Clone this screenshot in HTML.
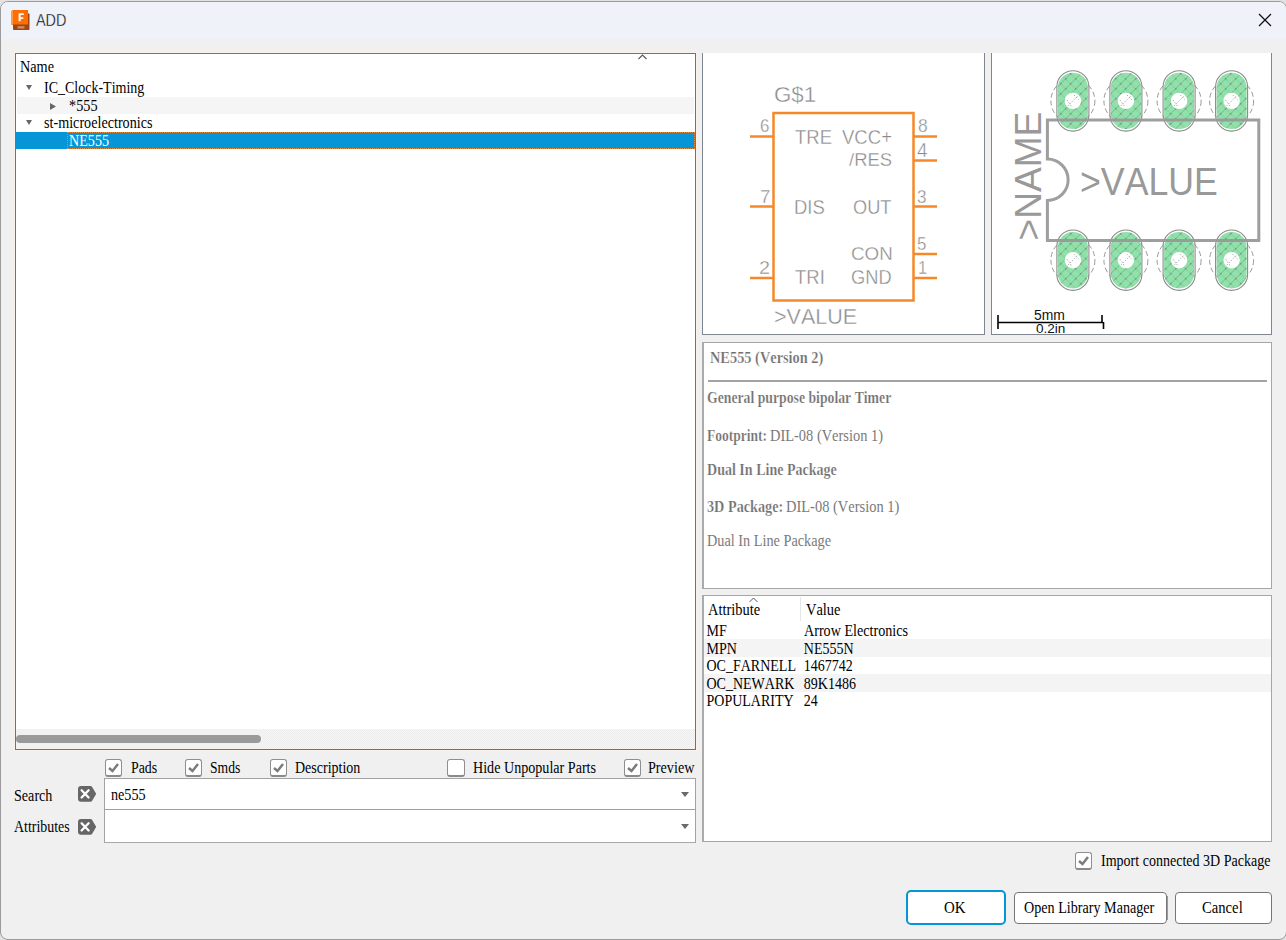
<!DOCTYPE html>
<html><head><meta charset="utf-8">
<style>
*{box-sizing:border-box}
html,body{margin:0;padding:0}
body{width:1286px;height:940px;overflow:hidden;position:relative;background:#e2e2e2;font-family:"Liberation Serif",serif}
.a{position:absolute}
.t{position:absolute;white-space:nowrap;line-height:1;font-kerning:none}
.f1{font-family:"Liberation Serif",serif}
.f2{font-family:"Liberation Sans",sans-serif}
#win{position:absolute;left:0;top:1px;width:1287px;height:939px;border:1px solid #9b9b9b;border-radius:8px;background:#f0f0f0;overflow:hidden}
.cb{position:absolute;width:17px;height:18px;border:1px solid #8e8e8e;border-bottom:2px solid #8a8a8a;border-radius:3px;background:#fff}
.btn{position:absolute;background:#fff;border:1px solid #767676;border-radius:4px}
</style></head><body>
<div id="win">
  <div class="a" style="left:0;top:0;width:1286px;height:37px;background:#eff3f9"></div>
</div>
<!-- app icon -->
<svg class="a" style="left:10px;top:9px" width="21" height="22" viewBox="0 0 21 22">
  <path d="M3 1 H17 Q18 1 18 2 V4 L19.5 5 V20 Q19.5 21 18.5 21 H4 Q3 21 3 20 V16 L1 14.5 V3 Z" fill="#9e4511"/>
  <path d="M1 3 L3 1 H16.5 Q18 1 18 2.5 V15.5 H1 Z" fill="#ff6d05"/>
  <path d="M1 3 L3 1 V15.5 H1 Z" fill="#ff9a44"/>
  <path d="M8.6 4.3 H13.8 V6.1 H10.7 V8.3 H13.3 V10 H10.7 V12.3 H8.6 Z" fill="#fff6ee"/>
  <rect x="7.5" y="17.2" width="7" height="2.3" fill="#e0a884" opacity="0.75"/>
</svg>
<!-- close X -->
<svg class="a" style="left:1258px;top:13px" width="15" height="15" viewBox="0 0 15 15">
  <path d="M1 1 L13 13 M13 1 L1 13" stroke="#111" stroke-width="1.3"/>
</svg>

<!-- tree -->
<div class="a" style="left:14px;top:52px;width:683px;height:699px;border:1px solid #fbf1ea"></div>
<div class="a" style="left:15px;top:53px;width:681px;height:697px;border:1px solid #0696d7;background:#fff"></div>
<div class="a" style="left:17px;top:97px;width:677px;height:17px;background:#f5f5f5"></div>
<div class="a" style="left:16px;top:132px;width:679px;height:17px;background:#0696d7"></div>
<div class="a" style="left:67px;top:132px;width:628px;height:17px;border:1px dotted #e08a40"></div>
<svg class="a" style="left:637px;top:53px" width="11" height="7"><path d="M1.5 6 L5.5 2 L9.5 6" fill="none" stroke="#555" stroke-width="1.1"/></svg>
<svg class="a" style="left:25px;top:84px" width="8" height="7"><path d="M1 1 H7 L4 6 Z" fill="#666"/></svg>
<svg class="a" style="left:25px;top:119px" width="8" height="7"><path d="M1 1 H7 L4 6 Z" fill="#666"/></svg>
<svg class="a" style="left:49px;top:101.5px" width="8" height="9"><path d="M1 1 V8 L7 4.5 Z" fill="#666"/></svg>
<!-- scrollbar -->
<div class="a" style="left:16px;top:729px;width:679px;height:20px;background-color:#f7f7f7;background-image:linear-gradient(45deg,#ececec 25%,transparent 25%,transparent 75%,#ececec 75%),linear-gradient(45deg,#ececec 25%,transparent 25%,transparent 75%,#ececec 75%);background-size:2px 2px;background-position:0 0,1px 1px"></div>
<div class="a" style="left:16px;top:729px;width:244px;height:20px;background:#f1f1f1"></div>
<div class="a" style="left:16px;top:735px;width:245px;height:8px;background:#9a9a9a;border-radius:4px"></div>

<!-- checkboxes -->
<div class="cb" style="left:105px;top:759px"></div>
<div class="cb" style="left:185px;top:759px"></div>
<div class="cb" style="left:270px;top:759px"></div>
<div class="cb" style="left:447px;top:759px;width:18px"></div>
<div class="cb" style="left:624px;top:759px"></div>
<div class="cb" style="left:1075px;top:852px"></div>
<svg class="a" style="left:105px;top:759px" width="17" height="18"><path d="M4 9 L7.5 12 L13 5" fill="none" stroke="#7c7c7c" stroke-width="2.5"/></svg>
<svg class="a" style="left:185px;top:759px" width="17" height="18"><path d="M4 9 L7.5 12 L13 5" fill="none" stroke="#7c7c7c" stroke-width="2.5"/></svg>
<svg class="a" style="left:270px;top:759px" width="17" height="18"><path d="M4 9 L7.5 12 L13 5" fill="none" stroke="#7c7c7c" stroke-width="2.5"/></svg>
<svg class="a" style="left:624px;top:759px" width="17" height="18"><path d="M4 9 L7.5 12 L13 5" fill="none" stroke="#7c7c7c" stroke-width="2.5"/></svg>
<svg class="a" style="left:1075px;top:852px" width="17" height="18"><path d="M4 9 L7.5 12 L13 5" fill="none" stroke="#7c7c7c" stroke-width="2.5"/></svg>

<!-- search / attributes -->
<svg class="a" style="left:77px;top:785px" width="21" height="18" viewBox="0 0 21 18"><path d="M4 1 H13.5 Q14.5 1 15 1.8 L19 8.5 Q19.3 8.9 19 9.3 L15 15.9 Q14.5 16.7 13.5 16.7 H4 Q1 16.7 1 13.7 V4 Q1 1 4 1 Z" fill="#666"/><path d="M4.6 5.3 L11.6 12.5 M11.6 5.3 L4.6 12.5" stroke="#fff" stroke-width="2.3" stroke-linecap="round"/></svg>
<svg class="a" style="left:77px;top:818px" width="21" height="18" viewBox="0 0 21 18"><path d="M4 1 H13.5 Q14.5 1 15 1.8 L19 8.5 Q19.3 8.9 19 9.3 L15 15.9 Q14.5 16.7 13.5 16.7 H4 Q1 16.7 1 13.7 V4 Q1 1 4 1 Z" fill="#666"/><path d="M4.6 5.3 L11.6 12.5 M11.6 5.3 L4.6 12.5" stroke="#fff" stroke-width="2.3" stroke-linecap="round"/></svg>
<div class="a" style="left:104px;top:778px;width:592px;height:33px;border:1px solid #a3a3a3;border-bottom:2px solid #a0a0a0;background:#fff"></div>
<div class="a" style="left:104px;top:810px;width:592px;height:33px;border:1px solid #a3a3a3;border-top:none;border-bottom:1px solid #a8a8a8;background:#fff"></div>
<svg class="a" style="left:680px;top:791px" width="10" height="7"><path d="M1 1 H9 L5 6 Z" fill="#6a6a6a"/></svg>
<svg class="a" style="left:680px;top:823px" width="10" height="7"><path d="M1 1 H9 L5 6 Z" fill="#6a6a6a"/></svg>

<!-- preview panels -->
<div class="a" style="left:702px;top:53px;width:283px;height:282px;border:1px solid #7f8690;border-top:none;background:#fff"></div>
<div class="a" style="left:991px;top:53px;width:281px;height:282px;border:1px solid #7f8690;border-top:none;background:#fff"></div>
<svg class="a" style="left:0;top:0" width="1286" height="940">
<g stroke="#f5892a" stroke-width="2.5" fill="none">
<rect x="773.5" y="113" width="140" height="187.5"/>
</g>
<g stroke="#f5892a" stroke-width="2.3">
<path d="M750 136.5 H773 M750 206.5 H773 M750 278 H773 M914 136.5 H937 M914 160.5 H937 M914 206.5 H937 M914 254 H937 M914 278 H937"/>
</g>
</svg>
<svg class="a" style="left:0;top:0" width="1286" height="940"><defs>
<pattern id="hat" patternUnits="userSpaceOnUse" width="7.07" height="7.07" patternTransform="translate(1072.9,100.9) rotate(45)">
<rect x="-0.5" y="0" width="1.1" height="7.07" fill="#6e7f73" opacity="0.6"/>
<rect x="0" y="3.1" width="7.07" height="0.9" fill="#7a9a82" opacity="0.35"/>
<rect x="-0.8" y="2.7" width="1.8" height="1.8" fill="#6a6a6a" opacity="0.75"/>
</pattern>
</defs>
<circle cx="1072.9" cy="100.9" r="22" fill="none" stroke="#8c8c8c" stroke-width="0.9" stroke-dasharray="5 3"/>
<rect x="1057.9" y="72.7" width="30" height="56.4" rx="15" fill="#8fe3aa"/>
<rect x="1057.9" y="72.7" width="30" height="56.4" rx="15" fill="url(#hat)"/>
<rect x="1056.9" y="70.7" width="32" height="60.4" rx="16" fill="none" stroke="#8a8a8a" stroke-width="1.1"/>
<circle cx="1072.9" cy="100.9" r="8.2" fill="#fff"/>
<path d="M1067.9 105.9 L1077.9 95.9 M1066.9 99.9 L1071.9 106.9 M1073.9 94.9 L1078.9 99.9" stroke="#9a9a9a" stroke-width="0.8" stroke-dasharray="1.5 1.5"/>
<circle cx="1125.9" cy="100.9" r="22" fill="none" stroke="#8c8c8c" stroke-width="0.9" stroke-dasharray="5 3"/>
<rect x="1110.9" y="72.7" width="30" height="56.4" rx="15" fill="#8fe3aa"/>
<rect x="1110.9" y="72.7" width="30" height="56.4" rx="15" fill="url(#hat)"/>
<rect x="1109.9" y="70.7" width="32" height="60.4" rx="16" fill="none" stroke="#8a8a8a" stroke-width="1.1"/>
<circle cx="1125.9" cy="100.9" r="8.2" fill="#fff"/>
<path d="M1120.9 105.9 L1130.9 95.9 M1119.9 99.9 L1124.9 106.9 M1126.9 94.9 L1131.9 99.9" stroke="#9a9a9a" stroke-width="0.8" stroke-dasharray="1.5 1.5"/>
<circle cx="1179.1" cy="100.9" r="22" fill="none" stroke="#8c8c8c" stroke-width="0.9" stroke-dasharray="5 3"/>
<rect x="1164.1" y="72.7" width="30" height="56.4" rx="15" fill="#8fe3aa"/>
<rect x="1164.1" y="72.7" width="30" height="56.4" rx="15" fill="url(#hat)"/>
<rect x="1163.1" y="70.7" width="32" height="60.4" rx="16" fill="none" stroke="#8a8a8a" stroke-width="1.1"/>
<circle cx="1179.1" cy="100.9" r="8.2" fill="#fff"/>
<path d="M1174.1 105.9 L1184.1 95.9 M1173.1 99.9 L1178.1 106.9 M1180.1 94.9 L1185.1 99.9" stroke="#9a9a9a" stroke-width="0.8" stroke-dasharray="1.5 1.5"/>
<circle cx="1231.6" cy="100.9" r="22" fill="none" stroke="#8c8c8c" stroke-width="0.9" stroke-dasharray="5 3"/>
<rect x="1216.6" y="72.7" width="30" height="56.4" rx="15" fill="#8fe3aa"/>
<rect x="1216.6" y="72.7" width="30" height="56.4" rx="15" fill="url(#hat)"/>
<rect x="1215.6" y="70.7" width="32" height="60.4" rx="16" fill="none" stroke="#8a8a8a" stroke-width="1.1"/>
<circle cx="1231.6" cy="100.9" r="8.2" fill="#fff"/>
<path d="M1226.6 105.9 L1236.6 95.9 M1225.6 99.9 L1230.6 106.9 M1232.6 94.9 L1237.6 99.9" stroke="#9a9a9a" stroke-width="0.8" stroke-dasharray="1.5 1.5"/>
<circle cx="1072.9" cy="260.2" r="22" fill="none" stroke="#8c8c8c" stroke-width="0.9" stroke-dasharray="5 3"/>
<rect x="1057.9" y="232.0" width="30" height="56.4" rx="15" fill="#8fe3aa"/>
<rect x="1057.9" y="232.0" width="30" height="56.4" rx="15" fill="url(#hat)"/>
<rect x="1056.9" y="230.0" width="32" height="60.4" rx="16" fill="none" stroke="#8a8a8a" stroke-width="1.1"/>
<circle cx="1072.9" cy="260.2" r="8.2" fill="#fff"/>
<path d="M1067.9 265.2 L1077.9 255.2 M1066.9 259.2 L1071.9 266.2 M1073.9 254.2 L1078.9 259.2" stroke="#9a9a9a" stroke-width="0.8" stroke-dasharray="1.5 1.5"/>
<circle cx="1125.9" cy="260.2" r="22" fill="none" stroke="#8c8c8c" stroke-width="0.9" stroke-dasharray="5 3"/>
<rect x="1110.9" y="232.0" width="30" height="56.4" rx="15" fill="#8fe3aa"/>
<rect x="1110.9" y="232.0" width="30" height="56.4" rx="15" fill="url(#hat)"/>
<rect x="1109.9" y="230.0" width="32" height="60.4" rx="16" fill="none" stroke="#8a8a8a" stroke-width="1.1"/>
<circle cx="1125.9" cy="260.2" r="8.2" fill="#fff"/>
<path d="M1120.9 265.2 L1130.9 255.2 M1119.9 259.2 L1124.9 266.2 M1126.9 254.2 L1131.9 259.2" stroke="#9a9a9a" stroke-width="0.8" stroke-dasharray="1.5 1.5"/>
<circle cx="1179.1" cy="260.2" r="22" fill="none" stroke="#8c8c8c" stroke-width="0.9" stroke-dasharray="5 3"/>
<rect x="1164.1" y="232.0" width="30" height="56.4" rx="15" fill="#8fe3aa"/>
<rect x="1164.1" y="232.0" width="30" height="56.4" rx="15" fill="url(#hat)"/>
<rect x="1163.1" y="230.0" width="32" height="60.4" rx="16" fill="none" stroke="#8a8a8a" stroke-width="1.1"/>
<circle cx="1179.1" cy="260.2" r="8.2" fill="#fff"/>
<path d="M1174.1 265.2 L1184.1 255.2 M1173.1 259.2 L1178.1 266.2 M1180.1 254.2 L1185.1 259.2" stroke="#9a9a9a" stroke-width="0.8" stroke-dasharray="1.5 1.5"/>
<circle cx="1231.6" cy="260.2" r="22" fill="none" stroke="#8c8c8c" stroke-width="0.9" stroke-dasharray="5 3"/>
<rect x="1216.6" y="232.0" width="30" height="56.4" rx="15" fill="#8fe3aa"/>
<rect x="1216.6" y="232.0" width="30" height="56.4" rx="15" fill="url(#hat)"/>
<rect x="1215.6" y="230.0" width="32" height="60.4" rx="16" fill="none" stroke="#8a8a8a" stroke-width="1.1"/>
<circle cx="1231.6" cy="260.2" r="8.2" fill="#fff"/>
<path d="M1226.6 265.2 L1236.6 255.2 M1225.6 259.2 L1230.6 266.2 M1232.6 254.2 L1237.6 259.2" stroke="#9a9a9a" stroke-width="0.8" stroke-dasharray="1.5 1.5"/>
<path d="M1047.4 120 H1258.8 V240.4 H1047.4 V200.5 A20.75 20.75 0 0 0 1047.4 159 Z" fill="none" stroke="#999999" stroke-width="3" opacity="0.95"/>
<path d="M998 315 V329 M998 322.5 H1103 M1102 315 V322.5 M1103.5 322 V329" stroke="#000" stroke-width="1.6" fill="none"/>
<text transform="translate(1041.00,240.53) rotate(-90) scale(0.9769,0.9907)" font-family="Liberation Sans" font-size="38" fill="#999999" style="font-kerning:none">&gt;NAME</text></svg>

<!-- description panel -->
<div class="a" style="left:702px;top:342px;width:570px;height:247px;border:1px solid #a6a6a6;border-left:2px solid #ababab;background:#fff"></div>
<div class="a" style="left:708px;top:380px;width:559px;height:2px;background:#a3a3a3"></div>

<!-- attribute panel -->
<div class="a" style="left:702px;top:595px;width:570px;height:247px;border:1px solid #a6a6a6;border-left:2px solid #ababab;background:#fff"></div>
<div class="a" style="left:800px;top:597px;width:1px;height:24px;background:#e6e6e6"></div>
<svg class="a" style="left:748px;top:596px" width="11" height="7"><path d="M1.5 6 L5.5 2 L9.5 6" fill="none" stroke="#555" stroke-width="1"/></svg>
<div class="a" style="left:704px;top:639px;width:567px;height:18px;background:#f4f4f4"></div>
<div class="a" style="left:704px;top:674px;width:567px;height:18px;background:#f4f4f4"></div>

<!-- buttons -->
<div class="btn" style="left:906px;top:890px;width:100px;height:35px;border:2px solid #0696d7;border-radius:5px"></div>
<div class="btn" style="left:1014px;top:892px;width:153px;height:32px"></div>
<div class="btn" style="left:1175px;top:892px;width:97px;height:32px"></div>
<div class="a" style="left:1167px;top:896px;width:1px;height:24px;background:#5aafdc"></div>

<div class="t f2" style="left:36.00px;top:13.30px;font-size:15px;color:#000;transform:scale(0.9599,1.0465);transform-origin:0 12.70px;-webkit-text-stroke:0.3px #eff3f9;">ADD</div>
<div class="t f1" style="left:19.50px;top:61.28px;font-size:14px;color:#000;transform:scale(1.0171,1.2000);transform-origin:0 11.72px;">Name</div>
<div class="t f1" style="left:43.50px;top:82.28px;font-size:14px;color:#000;transform:scale(0.9997,1.2000);transform-origin:0 11.72px;">IC_Clock-Timing</div>
<div class="t f1" style="left:69.00px;top:99.78px;font-size:14px;color:#000;transform:scale(1.0179,1.2000);transform-origin:0 11.72px;">*555</div>
<div class="t f1" style="left:43.50px;top:117.28px;font-size:14px;color:#000;transform:scale(1.0113,1.2000);transform-origin:0 11.72px;">st-microelectronics</div>
<div class="t f1" style="left:68.50px;top:134.78px;font-size:14px;color:#fff;transform:scale(1.0085,1.2000);transform-origin:0 11.72px;">NE555</div>
<div class="t f1" style="left:130.50px;top:762.28px;font-size:14px;color:#000;transform:scale(0.9906,1.2000);transform-origin:0 11.72px;">Pads</div>
<div class="t f1" style="left:210.20px;top:762.28px;font-size:14px;color:#000;transform:scale(0.9735,1.2000);transform-origin:0 11.72px;">Smds</div>
<div class="t f1" style="left:295.30px;top:762.28px;font-size:14px;color:#000;transform:scale(0.9997,1.2000);transform-origin:0 11.72px;">Description</div>
<div class="t f1" style="left:472.80px;top:762.28px;font-size:14px;color:#000;transform:scale(1.0075,1.2000);transform-origin:0 11.72px;">Hide Unpopular Parts</div>
<div class="t f1" style="left:647.80px;top:762.28px;font-size:14px;color:#000;transform:scale(1.0114,1.2000);transform-origin:0 11.72px;">Preview</div>
<div class="t f1" style="left:14.10px;top:789.78px;font-size:14px;color:#000;transform:scale(1.0081,1.2000);transform-origin:0 11.72px;">Search</div>
<div class="t f1" style="left:14.10px;top:821.28px;font-size:14px;color:#000;transform:scale(0.9930,1.2000);transform-origin:0 11.72px;">Attributes</div>
<div class="t f1" style="left:111.30px;top:788.78px;font-size:14px;color:#000;transform:scale(1.0113,1.2000);transform-origin:0 11.72px;">ne555</div>
<div class="t f1" style="left:1101.40px;top:854.78px;font-size:14px;color:#000;transform:scale(1.0024,1.2000);transform-origin:0 11.72px;">Import connected 3D Package</div>
<div class="t f1" style="left:944.00px;top:902.28px;font-size:14px;color:#000;transform:scale(1.0633,1.2000);transform-origin:0 11.72px;">OK</div>
<div class="t f1" style="left:1024.10px;top:902.28px;font-size:14px;color:#000;transform:scale(1.0096,1.2000);transform-origin:0 11.72px;">Open Library Manager</div>
<div class="t f1" style="left:1202.10px;top:902.28px;font-size:14px;color:#000;transform:scale(1.0471,1.2000);transform-origin:0 11.72px;">Cancel</div>
<div class="t f1" style="left:707.90px;top:604.28px;font-size:14px;color:#000;transform:scale(1.0327,1.2000);transform-origin:0 11.72px;">Attribute</div>
<div class="t f1" style="left:805.90px;top:604.28px;font-size:14px;color:#000;transform:scale(1.0321,1.2000);transform-origin:0 11.72px;">Value</div>
<div class="t f1" style="left:706.50px;top:625.28px;font-size:14px;color:#000;transform:scale(1.0000,1.2000);transform-origin:0 11.72px;">MF</div>
<div class="t f1" style="left:803.80px;top:625.28px;font-size:14px;color:#000;transform:scale(1.0095,1.2000);transform-origin:0 11.72px;">Arrow Electronics</div>
<div class="t f1" style="left:706.50px;top:642.78px;font-size:14px;color:#000;transform:scale(1.0000,1.2000);transform-origin:0 11.72px;">MPN</div>
<div class="t f1" style="left:803.80px;top:642.78px;font-size:14px;color:#000;transform:scale(1.0000,1.2000);transform-origin:0 11.72px;">NE555N</div>
<div class="t f1" style="left:706.50px;top:660.28px;font-size:14px;color:#000;transform:scale(1.0000,1.2000);transform-origin:0 11.72px;">OC_FARNELL</div>
<div class="t f1" style="left:803.80px;top:660.28px;font-size:14px;color:#000;transform:scale(1.0000,1.2000);transform-origin:0 11.72px;">1467742</div>
<div class="t f1" style="left:706.50px;top:677.78px;font-size:14px;color:#000;transform:scale(1.0000,1.2000);transform-origin:0 11.72px;">OC_NEWARK</div>
<div class="t f1" style="left:803.80px;top:677.78px;font-size:14px;color:#000;transform:scale(1.0000,1.2000);transform-origin:0 11.72px;">89K1486</div>
<div class="t f1" style="left:706.50px;top:695.28px;font-size:14px;color:#000;transform:scale(1.0000,1.2000);transform-origin:0 11.72px;">POPULARITY</div>
<div class="t f1" style="left:803.80px;top:695.28px;font-size:14px;color:#000;transform:scale(1.0000,1.2000);transform-origin:0 11.72px;">24</div>
<div class="t f1" style="left:710.40px;top:351.78px;font-size:14px;color:#6f6f6f;font-weight:bold;transform:scale(1.0261,1.2000);transform-origin:0 11.72px;-webkit-text-stroke:0.2px #fff;">NE555 (Version 2)</div>
<div class="t f1" style="left:707.30px;top:391.78px;font-size:14px;color:#6f6f6f;font-weight:bold;transform:scale(0.9810,1.2000);transform-origin:0 11.72px;-webkit-text-stroke:0.2px #fff;">General purpose bipolar Timer</div>
<div class="t f1" style="left:707.30px;top:430.08px;font-size:14px;color:#6f6f6f;font-weight:bold;transform:scale(0.9644,1.2000);transform-origin:0 11.72px;-webkit-text-stroke:0.2px #fff;">Footprint:</div>
<div class="t f1" style="left:770.30px;top:430.08px;font-size:14px;color:#7a7a7a;transform:scale(1.0307,1.2000);transform-origin:0 11.72px;">DIL-08 (Version 1)</div>
<div class="t f1" style="left:706.90px;top:463.58px;font-size:14px;color:#6f6f6f;font-weight:bold;transform:scale(1.0022,1.2000);transform-origin:0 11.72px;-webkit-text-stroke:0.2px #fff;">Dual In Line Package</div>
<div class="t f1" style="left:706.90px;top:500.68px;font-size:14px;color:#6f6f6f;font-weight:bold;transform:scale(1.0168,1.2000);transform-origin:0 11.72px;-webkit-text-stroke:0.2px #fff;">3D Package:</div>
<div class="t f1" style="left:785.60px;top:500.68px;font-size:14px;color:#7a7a7a;transform:scale(1.0335,1.2000);transform-origin:0 11.72px;">DIL-08 (Version 1)</div>
<div class="t f1" style="left:706.70px;top:534.58px;font-size:14px;color:#7a7a7a;transform:scale(1.0191,1.2000);transform-origin:0 11.72px;">Dual In Line Package</div>
<div class="t f2" style="left:773.88px;top:85.07px;font-size:20px;color:#8a8a8a;transform:scale(1.1167,1.0901);transform-origin:0 16.93px;-webkit-text-stroke:0.35px #fff;">G$1</div>
<div class="t f2" style="left:794.78px;top:127.07px;font-size:20px;color:#8a8a8a;transform:scale(0.9253,1.0175);transform-origin:0 16.93px;-webkit-text-stroke:0.35px #fff;">TRE</div>
<div class="t f2" style="left:841.82px;top:127.07px;font-size:20px;color:#8a8a8a;transform:scale(0.9275,1.0175);transform-origin:0 16.93px;-webkit-text-stroke:0.35px #fff;">VCC+</div>
<div class="t f2" style="left:848.90px;top:149.38px;font-size:20px;color:#8a8a8a;transform:scale(0.9244,0.9534);transform-origin:0 16.93px;-webkit-text-stroke:0.35px #fff;">/RES</div>
<div class="t f2" style="left:794.39px;top:197.07px;font-size:20px;color:#8a8a8a;transform:scale(0.9226,1.0175);transform-origin:0 16.93px;-webkit-text-stroke:0.35px #fff;">DIS</div>
<div class="t f2" style="left:852.74px;top:197.07px;font-size:20px;color:#8a8a8a;transform:scale(0.9115,1.0175);transform-origin:0 16.93px;-webkit-text-stroke:0.35px #fff;">OUT</div>
<div class="t f2" style="left:851.05px;top:243.07px;font-size:20px;color:#8a8a8a;transform:scale(0.9403,0.9448);transform-origin:0 16.93px;-webkit-text-stroke:0.35px #fff;">CON</div>
<div class="t f2" style="left:850.78px;top:267.07px;font-size:20px;color:#8a8a8a;transform:scale(0.9134,1.0029);transform-origin:0 16.93px;-webkit-text-stroke:0.35px #fff;">GND</div>
<div class="t f2" style="left:794.58px;top:267.07px;font-size:20px;color:#8a8a8a;transform:scale(0.9257,1.0029);transform-origin:0 16.93px;-webkit-text-stroke:0.35px #fff;">TRI</div>
<div class="t f2" style="left:773.84px;top:306.87px;font-size:20px;color:#8a8a8a;transform:scale(1.0766,1.0683);transform-origin:0 16.93px;-webkit-text-stroke:0.35px #fff;">>VALUE</div>
<div class="t f2" style="left:760.14px;top:117.26px;font-size:18px;color:#8a8a8a;transform:scale(0.9391,1.0498);transform-origin:0 15.24px;-webkit-text-stroke:0.35px #fff;">6</div>
<div class="t f2" style="left:759.74px;top:188.36px;font-size:18px;color:#8a8a8a;transform:scale(1.0388,1.0659);transform-origin:0 15.24px;-webkit-text-stroke:0.35px #fff;">7</div>
<div class="t f2" style="left:759.01px;top:258.76px;font-size:18px;color:#8a8a8a;transform:scale(1.0975,1.0175);transform-origin:0 15.24px;-webkit-text-stroke:0.35px #fff;">2</div>
<div class="t f2" style="left:918.04px;top:117.26px;font-size:18px;color:#8a8a8a;transform:scale(0.9708,1.0336);transform-origin:0 15.24px;-webkit-text-stroke:0.35px #fff;">8</div>
<div class="t f2" style="left:917.07px;top:141.76px;font-size:18px;color:#8a8a8a;transform:scale(1.0474,1.1305);transform-origin:0 15.24px;-webkit-text-stroke:0.35px #fff;">4</div>
<div class="t f2" style="left:917.25px;top:188.36px;font-size:18px;color:#8a8a8a;transform:scale(0.9491,1.0659);transform-origin:0 15.24px;-webkit-text-stroke:0.35px #fff;">3</div>
<div class="t f2" style="left:917.32px;top:234.76px;font-size:18px;color:#8a8a8a;transform:scale(0.9374,1.0094);transform-origin:0 15.24px;-webkit-text-stroke:0.35px #fff;">5</div>
<div class="t f2" style="left:917.65px;top:258.86px;font-size:18px;color:#8a8a8a;transform:scale(0.9149,1.0255);transform-origin:0 15.24px;-webkit-text-stroke:0.35px #fff;">1</div>
<div class="t f2" style="left:1080.04px;top:162.63px;font-size:38px;color:#999999;transform:scale(0.9393,1.0366);transform-origin:0 32.17px;">>VALUE</div>
<div class="t f2" style="left:1034.24px;top:309.05px;font-size:13px;color:#111;transform:scale(1.0687,1.0914);transform-origin:0 11.01px;">5mm</div>
<div class="t f2" style="left:1035.67px;top:321.86px;font-size:13px;color:#111;transform:scale(1.0433,1.0539);transform-origin:0 11.01px;">0.2in</div>
</body></html>
